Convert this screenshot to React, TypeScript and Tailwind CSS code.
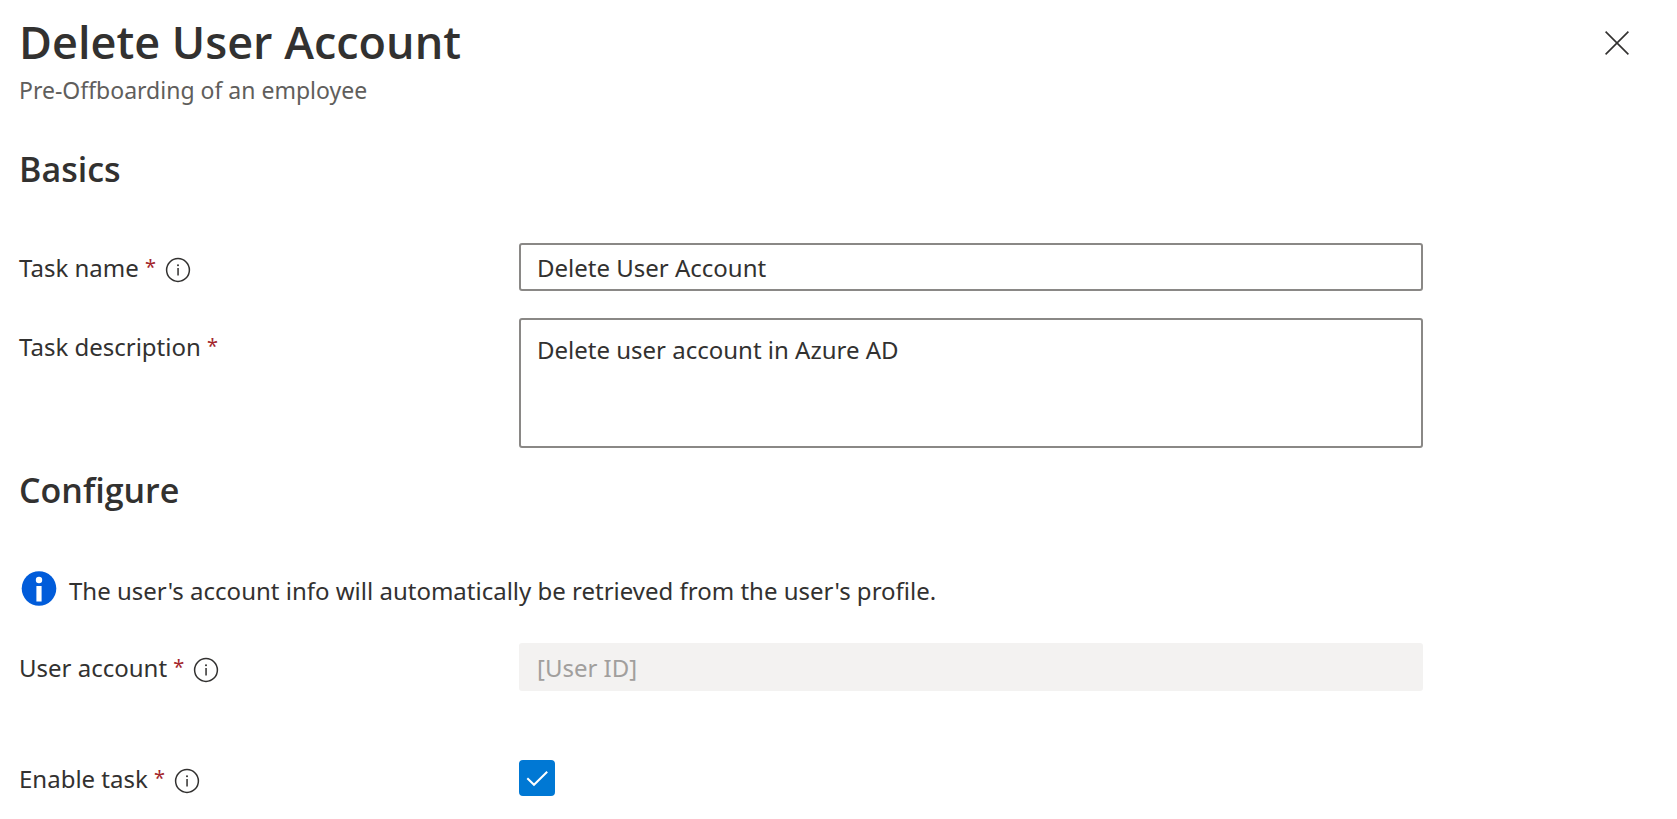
import { useState, type ReactNode } from "react";

function InfoButton({ label }: { label: string }) {
  return (
    <button type="button" aria-label={label} className="mt-1 ml-[9px] shrink-0 text-[#323130]">
      <svg className="block size-[26px]" viewBox="0 0 26 26" fill="none" aria-hidden="true">
        <circle cx="13" cy="13" r="11.4" stroke="currentColor" strokeWidth="1.5" />
        <rect x="12.3" y="11" width="1.5" height="7.5" fill="currentColor" />
        <circle cx="13" cy="8.2" r="1" fill="currentColor" />
      </svg>
    </button>
  );
}

type FieldProps = {
  id: string;
  label: string;
  info?: string;
  multiline?: boolean;
  className?: string;
  children: ReactNode;
};

function Field({ id, label, info, multiline = false, className = "", children }: FieldProps) {
  return (
    <div className={`flex items-start ${className}`}>
      <div className={`flex w-[500px] shrink-0 items-center text-[24px] leading-[50px] ${multiline ? "pt-1" : ""}`}>
        <label htmlFor={id}>
          {label} <span className="align-[3px] text-[20px] leading-none text-[#a4262c]">*</span>
        </label>
        {info && <InfoButton label={info} />}
      </div>
      <div className="flex min-h-12 max-w-[904px] flex-1 items-center">{children}</div>
    </div>
  );
}

export default function App() {
  const [name, setName] = useState("Delete User Account");
  const [description, setDescription] = useState("Delete user account in Azure AD");
  const [enabled, setEnabled] = useState(true);

  return (
    <main className="bg-white pb-4 pl-[19px] font-['Noto_Sans','Open_Sans',sans-serif] text-[#323130]">
      <header className="flex items-start justify-between pt-3 pr-12">
        <div>
          <h1 className="font-['Open_Sans','Noto_Sans',sans-serif] text-[45px] leading-[60px] font-semibold">
            Delete User Account
          </h1>
          <p className="mt-0.5 text-[23px] leading-8 text-[#605e5c]">Pre-Offboarding of an employee</p>
        </div>
        <button type="button" aria-label="Close" className="mt-[19px]">
          <svg className="block size-6" viewBox="0 0 24 24" fill="none" stroke="#323130" strokeWidth="1.6" aria-hidden="true">
            <path d="M0.6 0.6 23.4 23.4M23.4 0.6 0.6 23.4" />
          </svg>
        </button>
      </header>

      <form onSubmit={(e) => e.preventDefault()}>
        <section className="mt-[43px]">
          <h2 className="font-['Open_Sans','Noto_Sans',sans-serif] text-[34px] leading-10 font-semibold">Basics</h2>
          <Field id="task-name" label="Task name" info="About the task name" className="mt-[54px]">
            <input
              id="task-name"
              type="text"
              required
              value={name}
              onChange={(e) => setName(e.target.value)}
              className="h-12 w-full rounded-[3px] border-2 border-[#8a8886] bg-white px-4 text-[24px] leading-8"
            />
          </Field>
          <Field id="task-description" label="Task description" multiline className="mt-[25px]">
            <textarea
              id="task-description"
              required
              value={description}
              onChange={(e) => setDescription(e.target.value)}
              className="block h-[130px] w-full resize-none rounded-[3px] border-2 border-[#8a8886] bg-white px-4 py-[14px] text-[24px] leading-8"
            />
          </Field>
        </section>

        <section className="mt-[22px]">
          <h2 className="font-['Open_Sans','Noto_Sans',sans-serif] text-[34px] leading-10 font-semibold">Configure</h2>
          <div className="mt-[57px] flex items-start gap-3 pl-0.5">
            <svg className="mt-1 size-9 shrink-0" viewBox="0 0 36 36" aria-hidden="true">
              <circle cx="18" cy="17.5" r="17.3" fill="#015cda" />
              <circle cx="18" cy="9" r="3.2" fill="#fff" />
              <rect x="15.4" y="15" width="5.2" height="15.5" fill="#fff" />
            </svg>
            <p className="text-[24px] leading-[48px]">
              The user's account info will automatically be retrieved from the user's profile.
            </p>
          </div>
          <Field id="user-account" label="User account" info="About the user account" className="mt-7">
            <input
              id="user-account"
              type="text"
              disabled
              value="[User ID]"
              readOnly
              className="h-12 w-full rounded-[3px] border-2 border-[#f3f2f1] bg-[#f3f2f1] px-4 text-[24px] leading-8 text-[#a19f9d]"
            />
          </Field>
          <Field id="enable-task" label="Enable task" info="About enabling the task" className="mt-[61px]">
            <span className="grid size-9">
              <input
                id="enable-task"
                type="checkbox"
                checked={enabled}
                onChange={(e) => setEnabled(e.target.checked)}
                className="peer col-start-1 row-start-1 size-9 appearance-none rounded-[4px] border-2 border-[#323130] checked:border-[#0078d4] checked:bg-[#0078d4]"
              />
              <svg
                className="pointer-events-none invisible col-start-1 row-start-1 size-9 peer-checked:visible"
                viewBox="0 0 36 36"
                fill="none"
                stroke="#fff"
                strokeWidth="2"
                aria-hidden="true"
              >
                <path d="M8.3 18.2 15 24.8 28.2 11.7" />
              </svg>
            </span>
          </Field>
        </section>
      </form>
    </main>
  );
}
